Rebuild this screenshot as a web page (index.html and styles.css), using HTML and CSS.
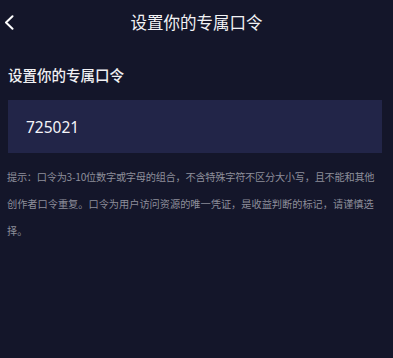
FILE: index.html
```html
<!DOCTYPE html>
<html lang="zh-CN">
<head>
<meta charset="utf-8">
<title>设置你的专属口令</title>
<link rel="stylesheet" href="styles.css">
</head>
<body>
<div class="page">
  <header class="nav">
    <span class="back">
      <svg width="10" height="15" viewBox="0 0 10 15"><path d="M8.5 1.2 L2 7.5 L8.5 13.8" fill="none" stroke="#ffffff" stroke-width="2" stroke-linecap="round" stroke-linejoin="round"/></svg>
    </span>
    <h1 class="title">设置你的专属口令</h1>
  </header>
  <section class="form">
    <div class="label">设置你的专属口令</div>
    <div class="input">725021</div>
    <p class="hint"><span class="tight">提示：口令为3-10位数字或字母的组合，不含特殊字符不区分大小写，且不能和其他</span><br>创作者口令重复。口令为用户访问资源的唯一凭证，是收益判断的标记，请谨慎选<br>择。</p>
  </section>
</div>
</body>
</html>
```
FILE: styles.css
```css
html, body {
  margin: 0;
  padding: 0;
  background: #14162a;
}
body {
  font-family: "Noto Sans CJK SC", "Noto Sans", sans-serif;
  color: #ffffff;
  width: 393px;
  height: 358px;
  overflow: hidden;
}
.nav {
  position: relative;
  height: 46px;
  display: flex;
  align-items: center;
  justify-content: center;
}
.back {
  position: absolute;
  left: 4px;
  top: 15px;
  width: 10px;
  height: 15px;
  display: flex;
}
.title {
  margin: 0;
  font-size: 16.5px;
  font-weight: 400;
  color: #f2f2f5;
  line-height: 1;
  margin-top: -2px;
}
.form {
  padding: 0 11px 0 8px;
}
.label {
  margin-top: 19px;
  font-size: 14.5px;
  line-height: 20px;
  font-weight: 500;
  color: #f0f0f3;
}
.input {
  margin-top: 15px;
  height: 53px;
  background: #222548;
  padding-left: 18px;
  display: flex;
  align-items: center;
  font-size: 15.5px;
  color: #f4f4f8;
  font-family: "Noto Sans", "Noto Sans CJK SC", sans-serif;
}
.hint {
  margin: 10px -11px 0 -1px;
  font-size: 10.2px;
  line-height: 27px;
  color: #8d8e9a;
  white-space: nowrap;
}
.tight {
  letter-spacing: -0.25px;
}
```
